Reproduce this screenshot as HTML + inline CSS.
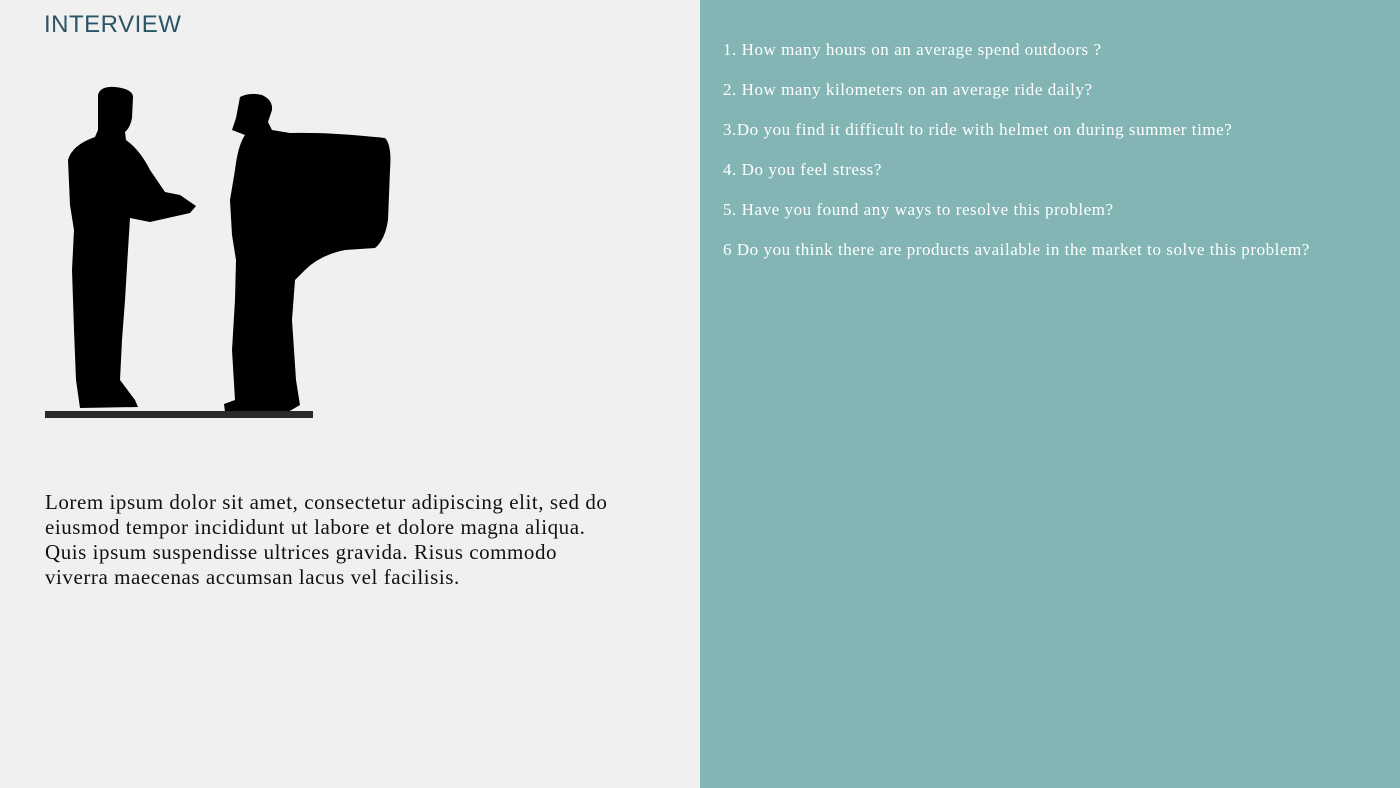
<!DOCTYPE html>
<html><head><style>
body{margin:0;width:1400px;height:788px;position:relative;background:#f0f0f0;overflow:hidden;font-family:"Liberation Serif",serif}
.right{position:absolute;left:700px;top:0;width:700px;height:788px;background:#83b5b4}
h1{position:absolute;left:44px;top:11px;margin:0;font:400 24px "Liberation Sans",sans-serif;color:#2a5566;letter-spacing:0.5px}
.q{position:absolute;left:23px;color:#fff;font-size:17px;letter-spacing:0.55px;white-space:nowrap}
.lorem{position:absolute;left:45px;top:490px;width:575px;font-size:21px;letter-spacing:0.55px;line-height:25px;color:#111}
</style></head><body>
<h1>INTERVIEW</h1>
<svg style="position:absolute;left:0;top:0" width="700" height="430">
<path fill="#000" d="M98 95 Q100 86 115 87 Q133 89 133 97 L132 118 Q130 128 125 132 L126 140 Q140 150 150 170 L165 192 L180 195 L196 206 L190 213 L150 222 L130 218 L128 250 L125 300 L122 340 L120 380 L135 400 L138 407 L80 408 L76 380 L74 330 L72 270 L74 230 L70 205 L68 160 Q72 145 95 137 L98 130 Z"/>
<path fill="#000" d="M240 97 Q250 92 262 95 Q273 100 272 110 L268 122 L272 130 L290 133 Q330 132 385 138 Q392 145 390 170 L388 220 Q385 240 375 248 L345 250 Q320 255 305 270 L295 280 L292 320 L296 380 L300 405 L288 412 L225 412 L224 404 L235 400 L232 350 L235 300 L236 260 L232 235 L230 200 L235 170 Q238 145 245 135 L232 130 L236 118 Z"/>
<rect x="45" y="411" width="268" height="7" fill="#2a2a2a"/>
</svg>
<div class="lorem">Lorem ipsum dolor sit amet, consectetur adipiscing elit, sed do eiusmod tempor incididunt ut labore et dolore magna aliqua. Quis ipsum suspendisse ultrices gravida. Risus commodo viverra maecenas accumsan lacus vel facilisis.</div>
<div class="right">
<div class="q" style="top:40px">1. How many hours on an average spend outdoors ?</div>
<div class="q" style="top:80px">2. How many kilometers on an average ride daily?</div>
<div class="q" style="top:120px">3.Do you find it difficult to ride with helmet on during summer time?</div>
<div class="q" style="top:160px">4. Do you feel stress?</div>
<div class="q" style="top:200px">5. Have you found any ways to resolve this problem?</div>
<div class="q" style="top:240px">6 Do you think there are products available in the market to solve this problem?</div>
</div>
</body></html>
